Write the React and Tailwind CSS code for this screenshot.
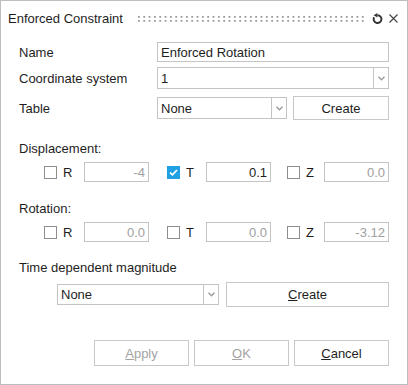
import React from 'react';

const Chevron = () => (
  <svg width="7" height="5" viewBox="0 0 7 5">
    <path d="M0.5 0.8 L3.5 3.8 L6.5 0.8" fill="none" stroke="#9a9a9a" strokeWidth="1.3" />
  </svg>
);

const Select = ({ value, className }) => (
  <div className={`flex border border-[#c4c4c4] bg-white ${className}`}>
    <div className="flex-1 flex items-center pl-[3px] text-[#1e1e1e]">{value}</div>
    <div className="w-[15px] border-l border-[#c4c4c4] flex items-center justify-center">
      <Chevron />
    </div>
  </div>
);

const Button = ({ children, disabled, className }) => (
  <button
    className={`border border-[#c8c8c8] bg-white flex items-center justify-center ${
      disabled ? 'text-[#a3a3a3]' : 'text-[#1e1e1e]'
    } ${className}`}
  >
    {children}
  </button>
);

const Check = ({ checked }) =>
  checked ? (
    <div className="w-[13px] h-[13px] bg-[#1ea0e3] flex items-center justify-center">
      <svg width="9" height="7" viewBox="0 0 9 7">
        <path d="M1 3.6 L3.4 5.8 L8 1" fill="none" stroke="#fff" strokeWidth="1.7" />
      </svg>
    </div>
  ) : (
    <div className="w-[13px] h-[13px] border border-[#8e8e8e] bg-white" />
  );

const Field = ({ value, active }) => (
  <div
    className={`w-[65px] h-[20px] border border-[#c4c4c4] bg-white flex items-center justify-end pr-[3px] ${
      active ? 'text-[#1e1e1e]' : 'text-[#a0a0a0]'
    }`}
  >
    {value}
  </div>
);

const AxisRow = ({ values, checked, className }) => {
  const axes = [
    { k: 'R', lw: 'w-[27px]' },
    { k: 'T', lw: 'w-[26px]' },
    { k: 'Z', lw: 'w-[24px]' },
  ];
  const gaps = ['ml-[25px]', 'ml-[18px]', 'ml-[16px]'];
  return (
    <div className={`flex items-center h-[20px] ${className}`}>
      {axes.map((a, i) => (
        <div key={a.k} className={`flex items-center ${gaps[i]}`}>
          <Check checked={checked === i} />
          <span className={`${a.lw} pl-[6px] text-[#1e1e1e]`}>{a.k}</span>
          <Field value={values[i]} active={checked === i} />
        </div>
      ))}
    </div>
  );
};

export default function App() {
  return (
    <div className="w-[408px] h-[385px] border border-[#bdbdbd] bg-white font-['Liberation_Sans',Arial,sans-serif] text-[13px] leading-[15px] text-[#1e1e1e] flex flex-col">
      {/* title bar */}
      <div className="h-[35px] flex items-center pl-[7px]">
        <span className="w-[130px]">Enforced Constraint</span>
        <svg width="226" height="8">
          {Array.from({ length: 43 }).map((_, i) => (
            <g key={i}>
              <rect x={i * 5.33} y="1" width="1.8" height="1.8" fill="#9c9c9c" />
              <rect x={i * 5.33} y="5" width="1.8" height="1.8" fill="#9c9c9c" />
            </g>
          ))}
        </svg>
        <svg width="11" height="11" viewBox="0 0 11 11" className="ml-[8px]">
          <path d="M5.5 2.2 A3.9 3.9 0 1 1 2.1 4.3" fill="none" stroke="#333" strokeWidth="1.9" />
          <path d="M1.6 2.3 L5.4 0 L5.4 4.6 Z" fill="#333" />
        </svg>
        <svg width="9" height="9" viewBox="0 0 9 9" className="ml-[6px]">
          <path d="M0.5 0.5 L8.5 8.5 M8.5 0.5 L0.5 8.5" stroke="#444" strokeWidth="1.1" />
        </svg>
      </div>

      <div className="flex flex-col pl-[18px] pr-[18px]">
        <div className="mt-[6px] flex items-center h-[20px]">
          <span className="w-[138px]">Name</span>
          <div className="flex-1 h-[20px] border border-[#c4c4c4] flex items-center pl-[3px]">Enforced Rotation</div>
        </div>
        <div className="mt-[5px] flex items-center h-[22px]">
          <span className="w-[138px]">Coordinate system</span>
          <Select value="1" className="flex-1 h-[22px]" />
        </div>
        <div className="mt-[7px] flex items-center h-[24px]">
          <span className="w-[138px]">Table</span>
          <Select value="None" className="w-[130px] h-[22px]" />
          <Button className="ml-[6px] flex-1 h-[24px]">Create</Button>
        </div>

        <div className="mt-[20px] h-[16px] flex items-center">Displacement:</div>
        <AxisRow className="mt-[6px]" values={['-4', '0.1', '0.0']} checked={1} />

        <div className="mt-[18px] h-[16px] flex items-center">Rotation:</div>
        <AxisRow className="mt-[6px]" values={['0.0', '0.0', '-3.12']} checked={-1} />

        <div className="mt-[17px] h-[16px] flex items-center">Time dependent magnitude</div>
        <div className="mt-[7px] flex items-center h-[25px]">
          <Select value="None" className="ml-[38px] w-[162px] h-[21px]" />
          <Button className="ml-[7px] flex-1 h-[25px]">
            <span><u>C</u>reate</span>
          </Button>
        </div>

        <div className="mt-[33px] flex justify-end gap-[5px]">
          <Button disabled className="w-[95px] h-[26px]">
            <span><u>A</u>pply</span>
          </Button>
          <Button disabled className="w-[95px] h-[26px]">
            <span><u>O</u>K</span>
          </Button>
          <Button className="w-[95px] h-[26px]">
            <span><u>C</u>ancel</span>
          </Button>
        </div>
      </div>
    </div>
  );
}
